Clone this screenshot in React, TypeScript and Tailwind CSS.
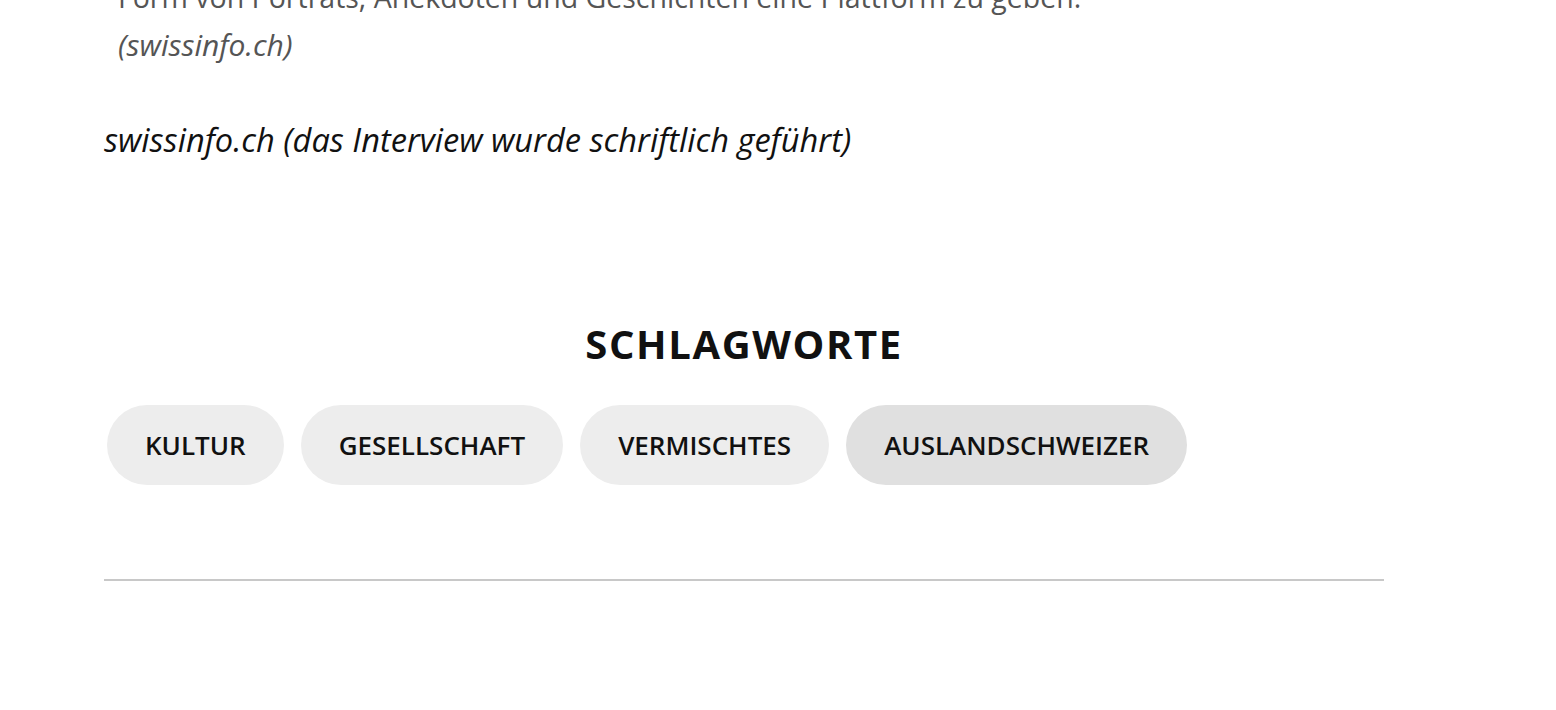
export default function App() {
  const tags = ['Kultur', 'Gesellschaft', 'Vermischtes', 'Auslandschweizer'];

  return (
    <div className="min-h-screen bg-white overflow-hidden" style={{ fontFamily: '"Open Sans", "Liberation Sans", sans-serif' }}>
      <div className="w-[1280px] ml-[104px]">
        <blockquote className="pl-[14px] -mt-[27px] text-[#555] text-[28.5px] leading-[48px]">
          <p>Form von Porträts, Anekdoten und Geschichten eine Plattform zu geben.</p>
          <p className="italic text-[30px]">(swissinfo.ch)</p>
        </blockquote>

        <p className="mt-[47px] italic text-[32.6px] leading-[48px] text-[#111]">
          swissinfo.ch (das Interview wurde schriftlich geführt)
        </p>

        <section className="mt-[156px]">
          <h2 className="text-center font-bold text-[40px] leading-[48px] uppercase text-[#111] tracking-[0.04em]">
            Schlagworte
          </h2>
          <div className="mt-[37px] flex flex-wrap gap-[17px] pl-[3px]">
            {tags.map((tag, i) => (
              <a
                key={tag}
                className={`h-[80px] px-[38px] rounded-full flex items-center text-[26px] font-semibold uppercase text-[#111] ${
                  i === 3 ? 'bg-[#e0e0e0]' : 'bg-[#ededed]'
                }`}
              >
                {tag}
              </a>
            ))}
          </div>
        </section>

        <hr className="mt-[94px] border-0 h-[2px] bg-[#c8c8c8]" />
      </div>
    </div>
  );
}
